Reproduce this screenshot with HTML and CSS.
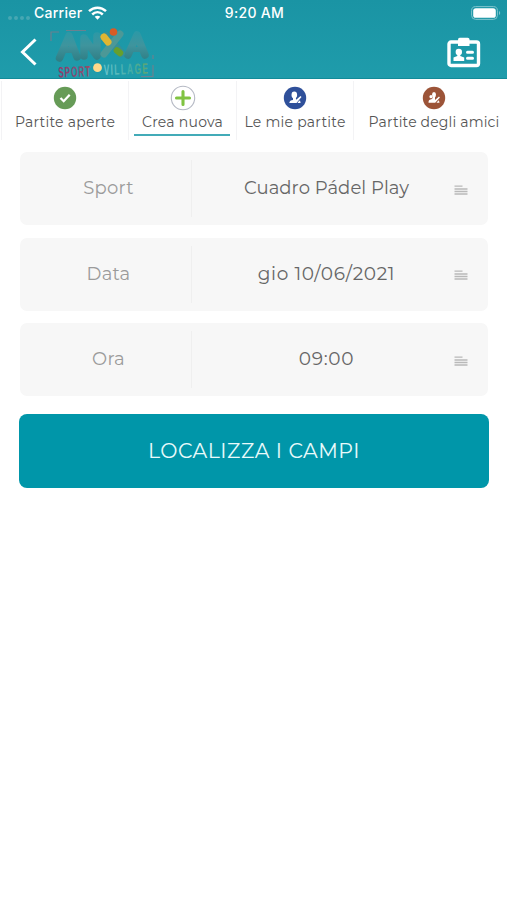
FILE: index.html
```html
<!DOCTYPE html>
<html lang="it">
<head>
<meta charset="utf-8">
<meta name="viewport" content="width=device-width, initial-scale=1">
<title>Anxa Sport Village</title>
<link rel="stylesheet" href="styles.css">
</head>
<body>
<header class="header">
  <div class="status">
    <div class="status-left">
      <span class="signal"><i></i><i></i><i></i><i></i></span>
      <span class="carrier">Carrier</span>
      <svg class="wifi" width="19" height="14" viewBox="0 0 19 14" fill="none" stroke="#fff" stroke-width="2.500"><path d="M1 5.100C5.900 .5 13.100 .5 18 5.100M4.200 8.500c3.100-2.900 7.500-2.900 10.600 0"/><path d="M6.700 10.800c1.600-1.500 4-1.500 5.600 0l-2.800 2.900z" fill="#fff" stroke="none"/></svg>
    </div>
    <span class="clock">9:20 AM</span>
    <svg class="battery" width="30" height="14" viewBox="0 0 30 14"><rect x=".6" y=".6" width="25.800" height="12.800" rx="4" fill="none" stroke="#7fc4cd"/><rect x="2.200" y="2.200" width="22.600" height="9.600" rx="2.600" fill="#fff"/><path d="M28 5v4c1.600-.6 1.600-3.400 0-4z" fill="#7fc4cd"/></svg>
  </div>
  <div class="navbar">
    <svg class="back" width="18" height="28" viewBox="0 0 18 28" fill="none" stroke="#fff" stroke-width="3"><path d="M15.500 1.500 2.500 14l13 12.500"/></svg>
    <svg class="logo" width="106" height="52" viewBox="0 0 106 52">
      <defs>
        <linearGradient id="letters" gradientUnits="userSpaceOnUse" x1="0" y1="4" x2="0" y2="33"><stop offset="0" stop-color="#2b99a7"/><stop offset=".5" stop-color="#3f949d"/><stop offset="1" stop-color="#307f86"/></linearGradient>
        <linearGradient id="sport" x1="0" x2="1"><stop offset="0" stop-color="#94396a"/><stop offset=".6" stop-color="#7d5278"/><stop offset="1" stop-color="#a04560"/></linearGradient>
        <linearGradient id="village" x1="0" x2="1"><stop offset="0" stop-color="#6cc4cb"/><stop offset=".6" stop-color="#45ada8"/><stop offset="1" stop-color="#5da570"/></linearGradient>
      </defs>
      <path d="M2 14V5h8M17 3.500h20M92 49.500h12V38M104 32v-4" fill="none" stroke="#8b7786" stroke-opacity=".7" stroke-width="1.200"/>
      <path d="M15 20h11l2 6H12zM86 20h9l2 5H83z" fill="url(#letters)"/>
      <g fill="none" stroke="url(#letters)" stroke-width="7.500" stroke-linecap="round" stroke-linejoin="round">
        <path d="M10.500 31 20 9l8 21M35 29V11l13 18V9M79 28 88 8l8 20"/>
      </g>
      <path d="M57 9 72 26" stroke="#368f98" stroke-width="8" stroke-linecap="round"/>
      <path d="M55 27 71 7" stroke="#4c9897" stroke-width="7" stroke-linecap="round"/>
      <path d="m55 10 4 5" stroke="#dfb632" stroke-width="7" stroke-linecap="round"/>
      <path d="m68 23.500 3 2.500" stroke="#669f2d" stroke-width="6.500" stroke-linecap="round"/>
      <circle cx="64.500" cy="5" r="3.800" fill="#d95b24"/>
      <g class="logo-text">
        <text transform="translate(9.500 50.500) rotate(-2) scale(.55 1)" textLength="58" fill="url(#sport)">SPORT</text>
        <text transform="translate(55 48) rotate(-2) scale(.55 1)" textLength="80" fill="url(#village)">VILLAGE</text>
      </g>
      <circle cx="48.500" cy="40.700" r="4.400" fill="#ffd98a"/>
    </svg>
    <svg class="badge" width="34" height="31" viewBox="0 0 34 31"><rect x="2" y="5" width="29.500" height="23.500" rx="2" fill="none" stroke="#fff" stroke-width="3.400"/><path d="M11 2.500Q11 .8 12.700.8h8Q22.500.8 22.500 2.500V9H11z" fill="#fff"/><circle cx="11.800" cy="15" r="3.200" fill="#fff"/><path d="M10.300 16h3v3l3.900 1.500V24H6.500v-3.500l3.800-1.500z" fill="#fff"/><path d="M20.500 15.300h5M20.500 21.300h5" stroke="#fff" stroke-width="3" stroke-linecap="round"/></svg>
  </div>
</header>

<nav class="tabs">
  <a class="tab tab-open">
    <svg width="26" height="26" viewBox="0 0 26 26"><circle cx="13" cy="13" r="11.200" fill="#669b57"/><path d="m8.500 13 3.200 3.200 6-6.400" fill="none" stroke="#fff" stroke-width="2.300"/></svg>
    <span>Partite aperte</span>
  </a>
  <a class="tab tab-new active">
    <svg width="26" height="26" viewBox="0 0 26 26"><circle cx="13" cy="13" r="11.700" fill="#fff" stroke="#b5b9c4" stroke-width="1.100"/><path d="M13 6.500v13M6.500 13h13" stroke="#80c342" stroke-width="3.100" stroke-linecap="round"/></svg>
    <span>Crea nuova</span>
  </a>
  <a class="tab tab-mine">
    <svg width="26" height="26" viewBox="0 0 26 26"><circle cx="13" cy="13" r="11.200" fill="#2f509a"/><ellipse cx="12.300" cy="10" rx="2.800" ry="3.400" fill="#fff"/><path d="M11 12.500h2.700l.5 2.300L18.500 11l1 1.100-5 6H7.300c.2-2.500 1.500-2.700 3.700-3.200zM16 17l2-1.800.6 2.900h-3z" fill="#fff"/></svg>
    <span>Le mie partite</span>
  </a>
  <a class="tab tab-friends">
    <svg width="26" height="26" viewBox="0 0 26 26"><circle cx="13" cy="13" r="11.200" fill="#9c5438"/><ellipse cx="13" cy="9.800" rx="2" ry="2.700" fill="#fff"/><circle cx="10" cy="11.700" r="1.600" fill="#fff"/><path d="M12 12h2v3l4-3.500.9 1-4.700 5.200H7.500c0-2.400 1-3.200 3.500-3.600zM16 17l1.900-1.700.6 2.400h-3z" fill="#fff"/></svg>
    <span>Partite degli amici</span>
  </a>
</nav>

<main class="form">
  <div class="row">
    <span class="label">Sport</span>
    <span class="value court">Cuadro Pádel Play</span>
    <svg class="lines" width="14" height="10" viewBox="0 0 14 10"><path d="M.5 1.200h8M.5 4h13M.5 6.500h13M.5 9h13"/></svg>
  </div>
  <div class="row">
    <span class="label">Data</span>
    <span class="value date">gio 10/06/2021</span>
    <svg class="lines" width="14" height="10" viewBox="0 0 14 10"><path d="M.5 1.200h8M.5 4h13M.5 6.500h13M.5 9h13"/></svg>
  </div>
  <div class="row">
    <span class="label">Ora</span>
    <span class="value time">09:00</span>
    <svg class="lines" width="14" height="10" viewBox="0 0 14 10"><path d="M.5 1.200h8M.5 4h13M.5 6.500h13M.5 9h13"/></svg>
  </div>
  <button class="submit">LOCALIZZA I CAMPI</button>
</main>
</body>
</html>
```
FILE: styles.css
```css
* { box-sizing: border-box; }
body {
  margin: 0;
  min-height: 900px;
  background: #fff;
  color: #616161;
  font-family: Montserrat, Inter, sans-serif;
  overflow: hidden;
}
svg { display: block; flex: none; }

.header {
  height: 79px;
  background: linear-gradient(#1a94a4, #1f9cab);
  border-bottom: 1px solid #128b99;
}
.status {
  height: 26px;
  display: grid;
  grid-template-columns: 1fr auto 1fr;
  align-items: center;
  padding: 0 6px 0 8px;
  color: #fff;
  font: 500 14px/26px Inter, sans-serif;
}
.status-left { display: flex; align-items: center; }
.signal { display: flex; gap: 2px; padding-top: 9px; width: 26px; }
.signal i { width: 4px; height: 4px; border-radius: 50%; background: #46a7b3; }
.carrier { letter-spacing: .25px; width: 54px; }
.clock { letter-spacing: .3px; }
.battery { justify-self: end; }
.navbar { height: 53px; display: flex; align-items: flex-start; padding: 0 26px 0 20px; }
.back { margin-top: 12px; }
.logo { margin-left: 11px; overflow: visible; margin-top: 1px; }
.logo-text { font: 700 15px "Liberation Sans", sans-serif; }
.badge { margin: 11px 0 0 auto; }

.tabs {
  height: 62px;
  padding: 2px 0 0 1px;
  display: flex;
  width: 514px;
}
.tab {
  display: flex;
  flex-direction: column;
  align-items: center;
  height: 59px;
  padding-top: 4px;
  border-left: 1px solid #f3f3f5;
  color: #555;
  font-size: 14px;
  line-height: 20px;
  white-space: nowrap;
  letter-spacing: .25px;
}
.tab span { margin-top: 1px; }
.tab-open { width: 127px; }
.tab-new { width: 108px; position: relative; }
.tab-mine { width: 117px; letter-spacing: .25px; }
.tab-friends { width: 161px; letter-spacing: .15px; }
.active::after {
  content: "";
  position: absolute;
  left: 5px;
  right: 6px;
  bottom: 4px;
  height: 2px;
  background: #43abb8;
}

.form {
  padding: 11px 18px 0 19px;
  display: flex;
  flex-direction: column;
}
.row {
  height: 73px;
  margin: 0 1px 12.600px;
  border-radius: 7px;
  background: #f7f7f7;
  display: grid;
  grid-template-columns: 172px 1fr 34px;
  align-items: center;
  font-size: 18px;
  letter-spacing: .2px;
  text-align: center;
}
.label {
  height: 57px;
  line-height: 56px;
  padding-left: 6px;
  border-right: 1px solid #efefef;
  color: #9b9b9b;
}
.value { line-height: 56px; height: 57px; padding-left: 7px; color: #666; }
.court { letter-spacing: .05px; }
.date { font-size: 18.500px; letter-spacing: .65px; }
.time { font-size: 18.500px; letter-spacing: .7px; }
.lines { stroke: #b9b9b9; stroke-width: 1.300; margin-top: 2px; }
.submit {
  height: 74px;
  margin-top: 5px;
  border: 0;
  border-radius: 8px;
  background: #0096a9;
  color: #e9fafb;
  font: 400 20.500px/24px Montserrat, Inter, sans-serif;
  letter-spacing: .5px;
}
```
